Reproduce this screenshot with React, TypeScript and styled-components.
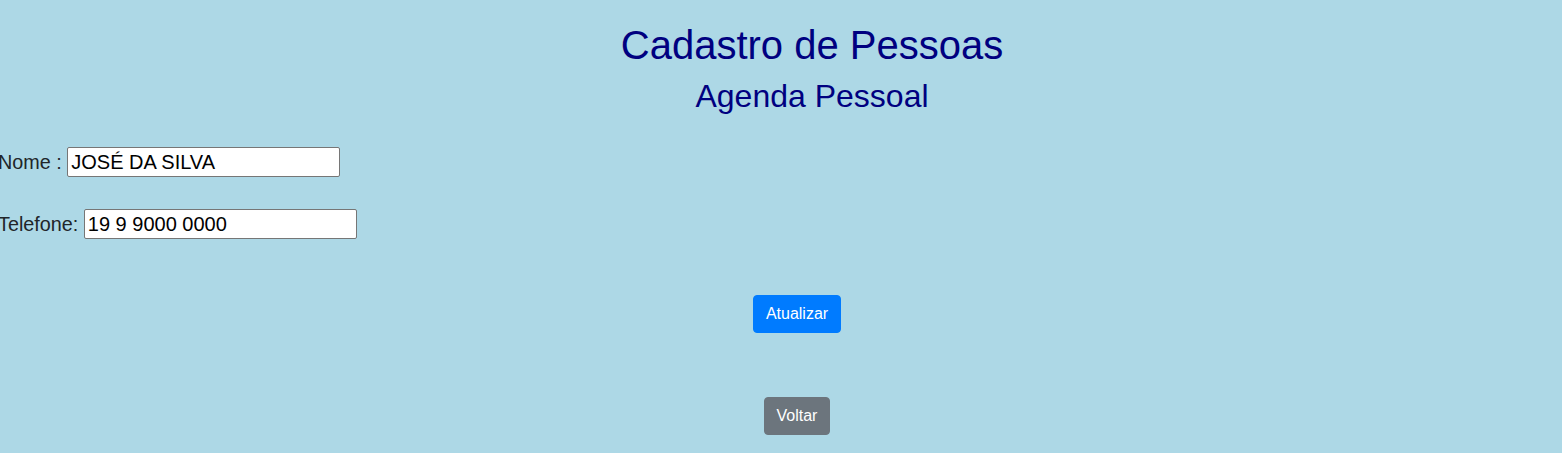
import React from "react";
import styled, { createGlobalStyle } from "styled-components";

const GlobalStyle = createGlobalStyle`
  html, body {
    margin: 0;
    padding: 0;
    background: #add8e6;
    font-family: "Liberation Sans", Arial, sans-serif;
    color: #212529;
  }
  * { box-sizing: border-box; }
`;

const Page = styled.div`
  display: flex;
  flex-direction: column;
  min-height: 453px;
`;

const Header = styled.header`
  display: flex;
  flex-direction: column;
  align-items: center;
  padding-top: 21px;
  padding-left: 62px;
`;

const Title = styled.h1`
  margin: 0 0 8px;
  font-size: 40px;
  line-height: 1.2;
  font-weight: 400;
  color: #000080;
`;

const Subtitle = styled.h2`
  margin: 0;
  font-size: 32px;
  line-height: 1.2;
  font-weight: 400;
  color: #000080;
`;

const Form = styled.form`
  display: flex;
  flex-direction: column;
  gap: 32px;
  margin-top: 32px;
  margin-left: -2px;
`;

const FieldRow = styled.div`
  display: flex;
  align-items: center;
  height: 30px;
  font-size: 19.8px;
  white-space: pre;
`;

const Input = styled.input`
  width: 273px;
  height: 30px;
  border: 1px solid #767676;
  border-radius: 2px;
  padding: 1px 3px;
  font-family: "Liberation Sans", Arial, sans-serif;
  font-size: 20px;
  color: #000;
  background: #fff;
`;

const Actions = styled.div<{ $top: number }>`
  display: flex;
  justify-content: center;
  padding-left: 32px;
  margin-top: ${(p) => p.$top}px;
`;

const Button = styled.button<{ $variant: "primary" | "secondary" }>`
  font-family: "Liberation Sans", Arial, sans-serif;
  font-size: 16px;
  line-height: 1.5;
  padding: 6px 12px;
  border: 1px solid ${(p) => (p.$variant === "primary" ? "#007bff" : "#6c757d")};
  border-radius: 4px;
  color: #fff;
  background: ${(p) => (p.$variant === "primary" ? "#007bff" : "#6c757d")};
  cursor: pointer;
`;

export default function App() {
  return (
    <Page>
      <GlobalStyle />
      <Header>
        <Title>Cadastro de Pessoas</Title>
        <Subtitle>Agenda Pessoal</Subtitle>
      </Header>
      <Form onSubmit={(e) => e.preventDefault()}>
        <FieldRow>
          {"Nome : "}
          <Input defaultValue="JOSÉ DA SILVA" />
        </FieldRow>
        <FieldRow>
          {"Telefone: "}
          <Input defaultValue="19 9 9000 0000" />
        </FieldRow>
      </Form>
      <Actions $top={56}>
        <Button $variant="primary" type="button">Atualizar</Button>
      </Actions>
      <Actions $top={64}>
        <Button $variant="secondary" type="button">Voltar</Button>
      </Actions>
    </Page>
  );
}
